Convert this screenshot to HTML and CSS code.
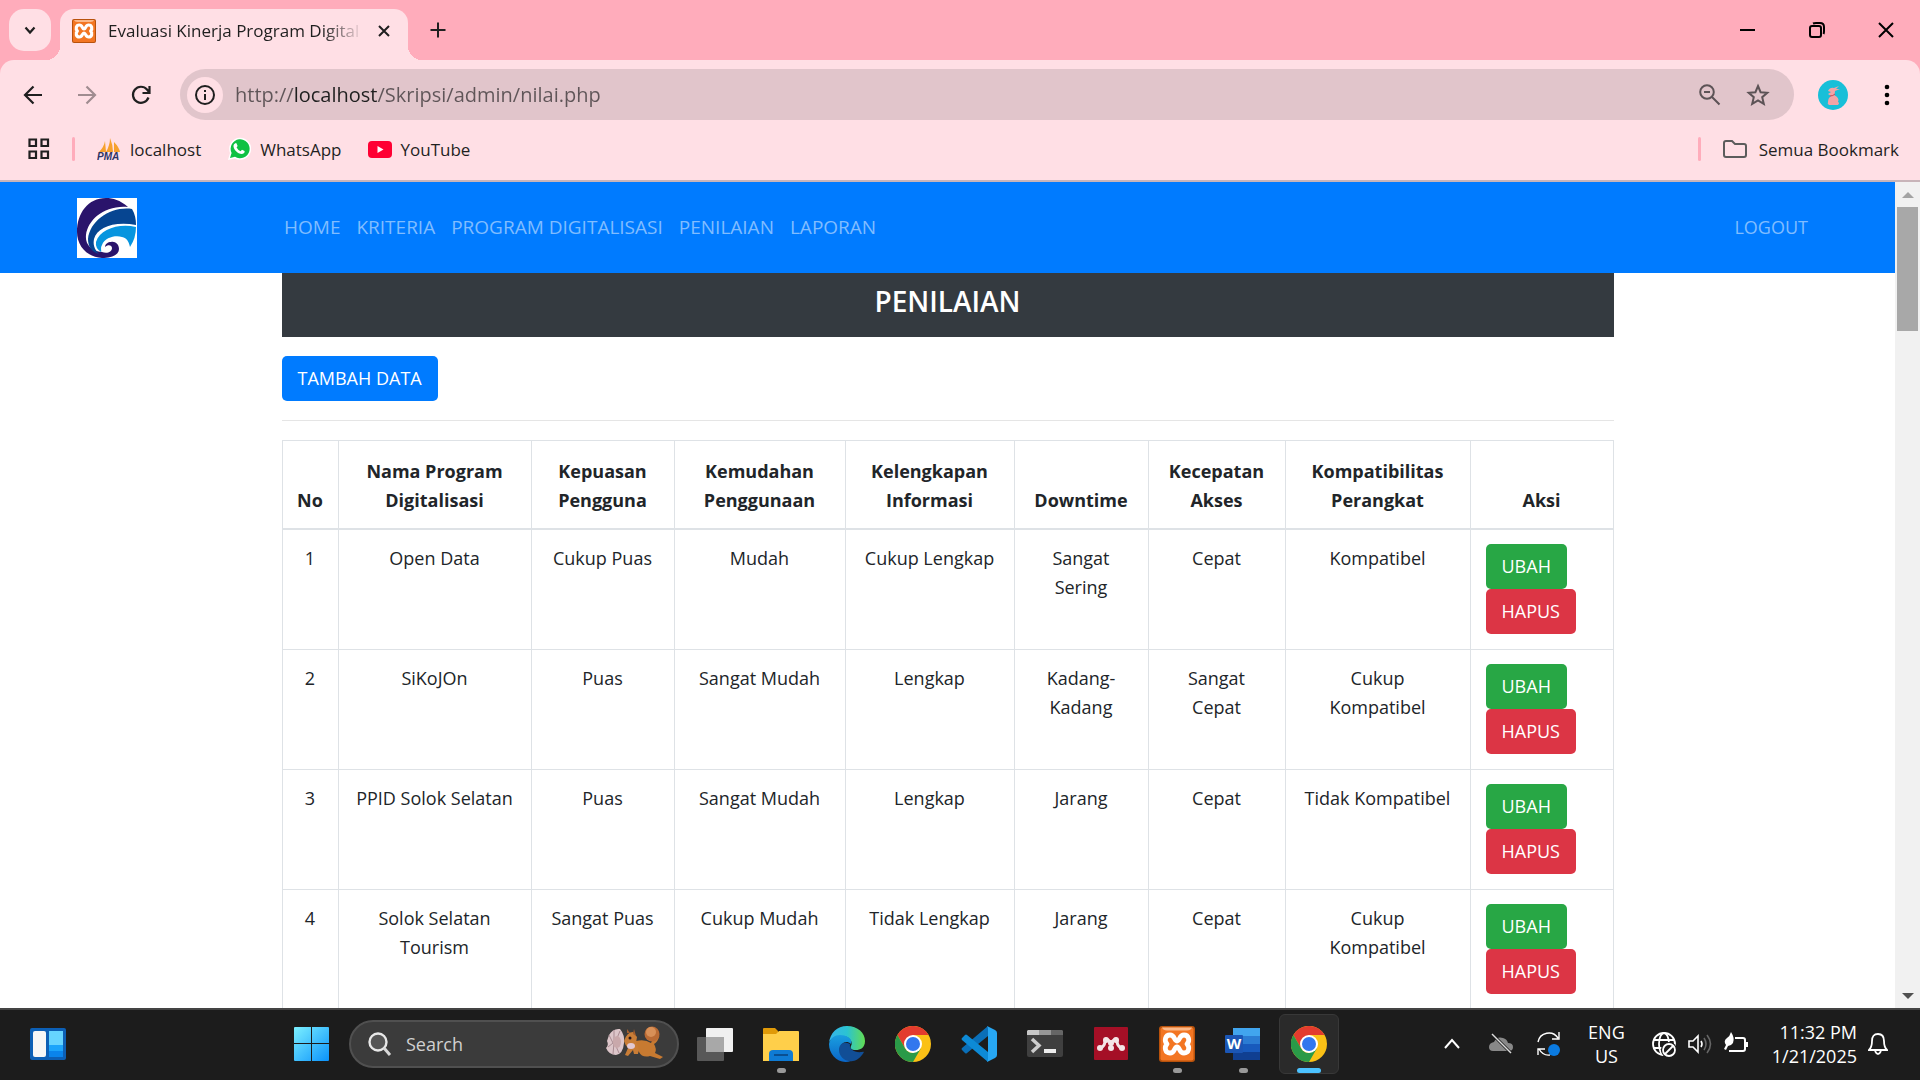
FILE: index.html
```html
<!DOCTYPE html>
<html lang="id">
<head>
<meta charset="utf-8">
<meta name="viewport" content="width=device-width, initial-scale=1">
<title>Evaluasi Kinerja Program Digitalisasi</title>
<link rel="stylesheet" href="styles.css">
</head>
<body>
<header class="browser">
  <div class="tabstrip">
    <button class="tab-search" aria-label="Telusuri tab"><svg width="18" height="18" viewBox="0 0 18 18"><path d="M4.500 6.500L9 11.500l4.500-5" fill="none" stroke="#1f1f1f" stroke-width="2.200"/></svg></button>
    <div class="tab">
      <svg width="24" height="24" viewBox="0 0 36 36">
        <g id="xampp">
          <rect width="36" height="36" rx="3" fill="#b8520c"/>
          <rect x="1.500" y="1.500" width="33" height="33" rx="2" fill="#f37623"/>
          <path d="M3 1.500h30q-1 3-5 3H8q-4 0-5-3z" fill="#fbb98a"/>
          <path d="M18 15c-3 0-2-6-7-6s-6 6-3 9c-3 3-2 9 3 9s4-6 7-6 2 6 7 6 6-6 3-9c3-3 2-9-3-9s-4 6-7 6z" fill="none" stroke="#fff" stroke-width="4.800" stroke-linejoin="round"/>
        </g>
      </svg>
      <span class="tab-title">Evaluasi Kinerja Program Digital</span>
      <button class="plain" aria-label="Tutup tab"><svg width="18" height="18" viewBox="0 0 18 18"><path d="M4 4l10 10M14 4L4 14" stroke="#1f1f1f" stroke-width="2"/></svg></button>
    </div>
    <button class="plain new-tab" aria-label="Tab baru"><svg width="18" height="18" viewBox="0 0 18 18"><path d="M9 1.500v15M1.500 9h15" stroke="#1f1f1f" stroke-width="2"/></svg></button>
    <div class="window-buttons">
      <button class="plain" aria-label="Minimalkan"><svg width="16" height="16" viewBox="0 0 16 16"><path d="M0 8h15" stroke="#000" stroke-width="2"/></svg></button>
      <button class="plain" aria-label="Pulihkan"><svg width="16" height="16" viewBox="0 0 16 16"><g fill="none" stroke="#000" stroke-width="2"><rect x="1" y="4" width="11" height="11" rx="2"/><path d="M4 1.500Q5 1 7 1h4q4 0 4 4v4q0 2-.5 3"/></g></svg></button>
      <button class="plain" aria-label="Tutup"><svg width="16" height="16" viewBox="0 0 16 16"><path d="M1 1l14 14M15 1L1 15" stroke="#000" stroke-width="2"/></svg></button>
    </div>
  </div>

  <div class="toolbar">
    <div class="nav-buttons">
      <button class="plain" aria-label="Kembali"><svg width="20" height="22" viewBox="0 0 20 22"><path d="M19 11H2.500M10.500 2.500L2 11l8.500 8.500" fill="none" stroke="#1f1f1f" stroke-width="2.200"/></svg></button>
      <button class="plain" aria-label="Maju"><svg width="20" height="22" viewBox="0 0 20 22"><path d="M1 11h16.500M9.500 2.500L18 11l-8.500 8.500" fill="none" stroke="#a08c90" stroke-width="2.200"/></svg></button>
      <button class="plain" aria-label="Muat ulang"><svg width="20" height="22" viewBox="0 0 20 22"><path d="M17.500 13.500A8 8 0 1 1 16 5.500L18 8M18.500 2v7h-7" fill="none" stroke="#1f1f1f" stroke-width="2.200"/></svg></button>
    </div>
    <div class="omnibox">
      <button class="site-info" aria-label="Informasi situs"><svg width="22" height="22" viewBox="0 0 22 22"><circle cx="11" cy="11" r="9" fill="none" stroke="#1f1f1f" stroke-width="2"/><path d="M11 10v6M11 6v2" stroke="#1f1f1f" stroke-width="2"/></svg></button>
      <input class="url" type="text" aria-label="Alamat" value="http://localhost/Skripsi/admin/nilai.php">
      <button class="plain" aria-label="Zoom"><svg width="24" height="24" viewBox="0 0 24 24"><g fill="none" stroke="#5c5356" stroke-width="2"><circle cx="9" cy="9" r="6.800"/><path d="M14 14l7.500 7.500M6 9h6"/></g></svg></button>
      <button class="plain" aria-label="Bookmark"><svg width="24" height="24" viewBox="0 0 24 24"><path d="M12 3l2.600 6.200 6.700.6-5.100 4.400 1.600 6.600L12 17.300l-5.800 3.500 1.600-6.600-5.100-4.400 6.700-.6z" fill="none" stroke="#5c5356" stroke-width="2"/></svg></button>
    </div>
    <button class="plain profile" aria-label="Profil"><svg width="30" height="30" viewBox="0 0 30 30"><circle cx="15" cy="15" r="15" fill="#18bfd8"/><path d="M10 11q2-4 6-3l5-2-3 3 4 0-5 2q0 3-1 4 6 3 4 7 2 1 0 3H11q-2-1-1-3 0-4 3-6l-3-2 3-2z" fill="#f3a3a6"/><path d="M12 16q3 0 5-2" fill="none" stroke="#c94654"/></svg></button>
    <button class="plain" aria-label="Menu"><svg width="8" height="24" viewBox="0 0 8 24"><circle cx="4" cy="4" r="2.300"/><circle cx="4" cy="12" r="2.300"/><circle cx="4" cy="20" r="2.300"/></svg></button>
  </div>

  <nav class="bookmarks" aria-label="Bookmark">
    <button class="plain" aria-label="Aplikasi"><svg width="22" height="22" viewBox="0 0 22 22"><path d="M1.500 1.500h6.500v6.500H1.500zM13.500 1.500h6.500v6.500h-6.500zM1.500 13.500h6.500v6.500H1.500zM13.500 13.500h6.500v6.500h-6.500z" fill="none" stroke="#1f1f1f" stroke-width="2.200"/></svg></button>
    <span class="divider"></span>
    <a href="#"><svg width="24" height="24" viewBox="0 0 24 24"><path d="M2 15Q7 10 8 4l1 11zM9 15q4-7 4-14 3 7 3 14zM17 15V5q5 5 6 10z" fill="#f6a12d"/><text class="pma" x="0" y="23">PMA</text></svg>localhost</a>
    <a href="#"><svg width="24" height="24" viewBox="0 0 24 24"><path d="M1 23l2-7A11 11 0 1 1 8 21.500z" fill="#fff"/><path d="M3 21l1.600-5A9.500 9.500 0 1 1 8 19.800z" fill="#0fc143"/><path d="M8 6.500q1-1 1.600 0l1 2.500-1 1.400q1.400 2.700 4 3.800l1.400-1.400 2.600 1.300q.4 2.500-2.600 2.900c-4.500 0-9-5-8.500-8.500q.3-1.300 1.500-2z" fill="#fff"/></svg>WhatsApp</a>
    <a href="#"><svg width="24" height="24" viewBox="0 0 24 24"><rect y="4" width="24" height="17" rx="4" fill="#f03"/><path d="M9.500 9v7l6-3.500z" fill="#fff"/></svg>YouTube</a>
    <span class="divider push"></span>
    <a class="all" href="#"><svg width="24" height="20" viewBox="0 0 24 20"><path d="M3 2h6l3 3h9q2 0 2 2v9q0 2-2 2H3q-2 0-2-2V4q0-2 2-2z" fill="none" stroke="#5c5c5c" stroke-width="2"/></svg>Semua Bookmark</a>
  </nav>
</header>

<div class="viewport">
  <div class="page">
    <nav class="navbar">
      <a class="brand" href="#" aria-label="Beranda"><svg width="60" height="60" viewBox="0 0 60 60">
        <rect width="60" height="60" fill="#fff"/>
        <path d="M51 9C43 2 36 0 29 0 11 0 0 15 0 34c0 14 10 25 25 26 9 0 17-3 17-9 0-5-4-8-8-7-3 0-6 2-6 5 3-3 7-2 7 1 0 4-5 6-10 4C14 53 8 46 9 37 11 22 27 7 51 9z" fill="#2a146b"/>
        <path d="M55 11C35 8 13 22 11 41c0 8 4 13 11 15C17 51 16 46 17 41 20 30 36 23 59 27c0-6-1-11-4-16z" fill="#064591"/>
        <path d="M59 29C42 25 23 31 19 44q-1 6 5 10c1 0-1-4 1-7 3-8 14-10 20-8 5 1 7 5 8 10q6-9 6-20z" fill="#0795df"/>
      </svg></a>
      <div class="menu">
        <a href="#">HOME</a>
        <a href="#">KRITERIA</a>
        <a href="#">PROGRAM DIGITALISASI</a>
        <a href="#">PENILAIAN</a>
        <a href="#">LAPORAN</a>
      </div>
      <a class="logout" href="#">LOGOUT</a>
    </nav>
    <main class="container">
      <h1 class="title">PENILAIAN</h1>
      <a class="btn primary" href="#">TAMBAH DATA</a>
      <hr>
      <table>
        <colgroup><col class="c-no"><col class="c-name"><col class="c-kp"><col class="c-km"><col class="c-kl"><col class="c-dt"><col class="c-ka"><col class="c-kt"><col class="c-ak"></colgroup>
        <thead>
          <tr><th>No</th><th>Nama Program Digitalisasi</th><th>Kepuasan Pengguna</th><th>Kemudahan Penggunaan</th><th>Kelengkapan Informasi</th><th>Downtime</th><th>Kecepatan Akses</th><th>Kompatibilitas Perangkat</th><th>Aksi</th></tr>
        </thead>
        <tbody>
          <tr><td>1</td><td>Open Data</td><td>Cukup Puas</td><td>Mudah</td><td>Cukup Lengkap</td><td>Sangat Sering</td><td>Cepat</td><td>Kompatibel</td><td><div class="actions"><a class="btn success" href="#">UBAH</a><a class="btn danger" href="#">HAPUS</a></div></td></tr>
          <tr><td>2</td><td>SiKoJOn</td><td>Puas</td><td>Sangat Mudah</td><td>Lengkap</td><td>Kadang-Kadang</td><td>Sangat Cepat</td><td>Cukup Kompatibel</td><td><div class="actions"><a class="btn success" href="#">UBAH</a><a class="btn danger" href="#">HAPUS</a></div></td></tr>
          <tr><td>3</td><td>PPID Solok Selatan</td><td>Puas</td><td>Sangat Mudah</td><td>Lengkap</td><td>Jarang</td><td>Cepat</td><td>Tidak Kompatibel</td><td><div class="actions"><a class="btn success" href="#">UBAH</a><a class="btn danger" href="#">HAPUS</a></div></td></tr>
          <tr><td>4</td><td>Solok Selatan Tourism</td><td>Sangat Puas</td><td>Cukup Mudah</td><td>Tidak Lengkap</td><td>Jarang</td><td>Cepat</td><td>Cukup Kompatibel</td><td><div class="actions"><a class="btn success" href="#">UBAH</a><a class="btn danger" href="#">HAPUS</a></div></td></tr>
        </tbody>
      </table>
    </main>
  </div>
  <div class="scrollbar">
    <svg width="12" height="6" viewBox="0 0 12 6"><path d="M0 6l6-6 6 6z" fill="#a3a3a3"/></svg>
    <span class="thumb"></span>
    <svg width="12" height="6" viewBox="0 0 12 6"><path d="M0 0l6 6 6-6z" fill="#505050"/></svg>
  </div>
</div>

<footer class="taskbar">
  <div class="side">
    <button class="plain" aria-label="Widget"><svg width="36" height="32" viewBox="0 0 36 32"><rect width="36" height="32" rx="2" fill="#0c5fb5"/><rect x="3" y="3" width="13" height="26" rx="2" fill="#f6f6f6"/><path d="M19 3h14v14H19z" fill="#66d4ff"/><path d="M19 17h14v6H19z" fill="#1ba4fb"/><path d="M19 23h14v6H19z" fill="#0a84ec"/></svg></button>
  </div>
  <div class="apps">
    <button class="plain start" aria-label="Mulai"><svg width="36" height="36" viewBox="0 0 36 36"><defs><linearGradient id="win" x2="1" y2="1"><stop offset="0" stop-color="#7cf0ff"/><stop offset="1" stop-color="#0a92fb"/></linearGradient></defs><path d="M1 1h16v16H0V2q0-1 1-1zM18 1h16q1 0 1 1v15H18zM0 18h17v17H1q-1 0-1-1zM18 18h17v16q0 1-1 1H18z" fill="url(#win)"/></svg></button>
    <label class="search">
      <svg width="24" height="30" viewBox="0 0 24 30"><circle cx="10" cy="13" r="8.500" fill="#555" stroke="#e8e8e8" stroke-width="2.400"/><path d="M16 19l6 7" stroke="#d8d8d8" stroke-width="3"/></svg>
      <input type="text" placeholder="Search" aria-label="Search">
      <svg width="60" height="42" viewBox="0 0 60 42">
        <path d="M4 12Q8 5 15 6q5 6 4 14-1 11-8 12-7 0-10-7 3-3 1-7z" fill="#dcc5c9"/>
        <path d="M8 20L4 12M8 20L3 24M9 20L9 7M9 20L8 31M10 20l5-12M10 21l4 9" stroke="#a98b92" fill="none"/><ellipse cx="12" cy="19" rx="4" ry="6" fill="#c9a8ab"/>
        <path d="M31 18q9-2 15 2l2-4q6 0 7-5-2 8-6 10 3 5 1 9l8 4-3 2-10-3q-8 2-11-4l-3-4z" fill="#c77a31"/>
        <circle cx="47" cy="11" r="7.500" fill="#ba6b35"/><circle cx="46" cy="9" r="5" fill="#d89058"/>
        <path d="M19 18q3-9 9-9l4 5-1 6q4 4 2 11h-4l-1-4-5 6-3-1 3-7q-3-3-4-7z" fill="#c97d36"/>
        <path d="M22 10V6l3 4M28 11l1-5 2 7" fill="#a65f2d"/><circle cx="25" cy="15" r="1.500" fill="#26161b"/><ellipse cx="26" cy="23" rx="4" ry="3" fill="#e2c9d3"/>
      </svg>
    </label>
    <button class="plain task" aria-label="Tampilan tugas"><svg width="36" height="36" viewBox="0 0 36 36"><rect x="0" y="11" width="27" height="24" rx="1" fill="#585858"/><rect x="9" y="2" width="27" height="24" rx="1" fill="#f0f0f0"/><path d="M9 11h18v15H9z" fill="#a8a8a8"/></svg></button>
    <button class="plain task open" aria-label="File Explorer"><svg width="36" height="36" viewBox="0 0 36 36"><path d="M0 3q0-1 1-1h11l3 3v4H0z" fill="#e09a08"/><path d="M0 8h13l3-3h19q1 0 1 1v29H0z" fill="#ffcf4a"/><path d="M6 35V28q0-4 4-4h16q4 0 4 4v7z" fill="#0f7bd4"/><path d="M11 29h14" stroke="#0a4f91" stroke-width="2"/></svg></button>
    <button class="plain task" aria-label="Edge"><svg width="36" height="36" viewBox="0 0 36 36"><defs><linearGradient id="edge-top"><stop offset="0" stop-color="#36b4ec"/><stop offset=".5" stop-color="#2bc3d2"/><stop offset="1" stop-color="#62dc52"/></linearGradient><linearGradient id="edge-low" x2="0" y2="1"><stop offset="0" stop-color="#1a9fe0"/><stop offset="1" stop-color="#0a66c8"/></linearGradient></defs><path d="M0 17C1 7 8 0 18 0c11 0 18 7 18 15 0 7-5 9-9 9-5 0-6-2-5-4 3-5-3-10-9-10C6 10 1 13 0 17z" fill="url(#edge-top)"/><path d="M0 18C1 12 6 9 11 9c7 0 13 4 11 9-5-5-12 0-11 7 1 6 6 9 11 10-12 4-22-6-22-17z" fill="url(#edge-low)"/><path d="M10 24c0-6 5-9 11-6-1 5 4 9 12 8 3-1 2 0 0 3-3 4-8 7-12 6-6 0-11-5-11-11z" fill="#114e96"/></svg></button>
    <button class="plain task" aria-label="Chrome"><svg width="36" height="36" viewBox="0 0 36 36"><g id="chrome"><circle cx="18" cy="18" r="18" fill="#fbc116"/><path d="M18 9h15.600A18 18 0 0 0 2.400 9l7.800 13.500z" fill="#e33b2e"/><path d="M2.400 9A18 18 0 0 0 18 36l7.800-13.500-7.800 4.500q-5 0-7.800-4.500z" fill="#2a9a48"/><circle cx="18" cy="18" r="9" fill="#fff"/><circle cx="18" cy="18" r="7" fill="#3277ee"/></g></svg></button>
    <button class="plain task" aria-label="Visual Studio Code"><svg width="36" height="36" viewBox="0 0 36 36"><path d="M1 24l3 3q1 1 2 0L27 10V0L1 22q-1 1 0 2z" fill="#0a6fb8"/><path d="M1 12l3-3q1-1 2 0l21 17v10L1 14q-1-1 0-2z" fill="#0d8ad6"/><path d="M26 0l8 4q2 1 2 3v22q0 2-2 3l-8 4q1-1 1-3V3q0-2-1-3z" fill="#27a7f3"/></svg></button>
    <button class="plain task" aria-label="Terminal"><svg width="36" height="36" viewBox="0 0 36 36"><rect y="4" width="36" height="27" rx="2" fill="#3f3f3f"/><path d="M1 4h11v5H0V5z" fill="#c6c6c6"/><path d="M12 4h12v5H12z" fill="#979797"/><path d="M24 4h11l1 1v4H24z" fill="#666"/><path d="M5 13l7 6.500L5 26" fill="none" stroke="#ccc" stroke-width="3.500"/><path d="M17 23h12v4H17z" fill="#eee"/></svg></button>
    <button class="plain task" aria-label="Mendeley"><svg width="36" height="36" viewBox="0 0 36 36"><rect x="1" y="1" width="34" height="33" rx="1" fill="#a50f26"/><path d="M7 22q5-1 5-8M29 22q-5-1-5-8M12 13q4 0 6 5 2-5 6-5" fill="none" stroke="#f4e4e6" stroke-width="3"/><g fill="#f4e4e6"><circle cx="13" cy="14" r="3"/><circle cx="23" cy="14" r="3"/><circle cx="7" cy="22" r="3"/><circle cx="29" cy="22" r="3"/><circle cx="18" cy="22" r="3"/><circle cx="18" cy="17" r="3"/></g></svg></button>
    <button class="plain task open" aria-label="XAMPP"><svg width="36" height="36" viewBox="0 0 36 36"><use href="#xampp"/></svg></button>
    <button class="plain task open" aria-label="Word"><svg width="36" height="36" viewBox="0 0 36 36"><path d="M8 2h27v8H8z" fill="#41a5ee"/><path d="M8 10h27v8H8z" fill="#2b7cd3"/><path d="M8 18h27v8H8z" fill="#185abd"/><path d="M8 26h27v8H8z" fill="#103f91"/><rect y="9" width="18" height="18" rx="1" fill="#1b56b5"/><text class="word" x="9" y="23">W</text></svg></button>
    <button class="plain task open active" aria-label="Chrome aktif"><svg width="36" height="36" viewBox="0 0 36 36"><use href="#chrome"/></svg></button>
  </div>
  <div class="tray">
    <svg class="chevron" width="16" height="16" viewBox="0 0 16 16"><path d="M1 12l7-8 7 8" fill="none" stroke="#fff" stroke-width="2"/></svg>
    <svg class="cloud" width="26" height="24" viewBox="0 0 26 24"><path d="M5 19q-4 0-4-4t5-5q3-6 9-4 4 1 5 5 5 0 5 4t-4 4z" fill="#888"/><path d="M5 3l17 17" stroke="#1c1c1c" stroke-width="3"/><path d="M4 2l19 19" stroke="#ddd" stroke-width="1.500"/></svg>
    <svg width="26" height="26" viewBox="0 0 26 26"><path d="M2 11A11 11 0 0 1 22 7M23 1v7h-7M2 24v-6h7M3 18q4 7 11 6" fill="none" stroke="#fff" stroke-width="1.400"/><circle cx="18" cy="19" r="6" fill="#0a7ae0"/></svg>
    <div class="lang">ENG<br>US</div>
    <svg width="26" height="26" viewBox="0 0 26 26"><g fill="none" stroke="#fff" stroke-width="1.800"><circle cx="13" cy="13" r="11"/><ellipse cx="13" cy="13" rx="5" ry="11"/><path d="M3 9h20M3 17h12"/></g><circle cx="18" cy="19" r="8" fill="#1c1c1c"/><g fill="none" stroke="#fff" stroke-width="1.800"><circle cx="18" cy="19" r="6"/><path d="M14 23l8-8"/></g></svg>
    <svg width="24" height="24" viewBox="0 0 24 24"><path d="M1 9h4l5-5v16l-5-5H1z" fill="none" stroke="#fff" stroke-width="1.600"/><path d="M13 9q2 3 0 6" fill="none" stroke="#fff" stroke-width="1.600"/><path d="M16 6q4 6 0 12M19 3q7 9 0 18" fill="none" stroke="#666" stroke-width="1.600"/></svg>
    <svg width="26" height="24" viewBox="0 0 26 24"><path d="M12 6h8q2 0 2 2v9q0 2-2 2H6" fill="none" stroke="#fff" stroke-width="2"/><path d="M23 10h2v5h-2z" fill="#fff"/><path d="M8 0q4 6 2 11-2 3-5 3l-2 4-2-1 2-4q-3-4 1-7 3-2 4-6z" fill="#fff"/></svg>
    <div class="clock">11:32 PM<br>1/21/2025</div>
    <svg width="20" height="24" viewBox="0 0 20 24"><path d="M1 18q3-3 3-9 0-7 6-7t6 7q0 6 3 9zM7 19q3 6 6 0" fill="none" stroke="#fff" stroke-width="1.800"/></svg>
  </div>
</footer>
</body>
</html>
```
FILE: styles.css
```css
* { box-sizing: border-box; }

body {
  margin: 0;
  height: 100vh;
  display: flex;
  flex-direction: column;
  overflow: hidden;
  font: 18px/29px "Open Sans", "Noto Sans", sans-serif;
  color: #212529;
  background: #fff;
}

svg { display: block; flex: none; }
a { color: inherit; text-decoration: none; }
input { font: inherit; color: inherit; border: 0; padding: 0; background: none; min-width: 0; outline: 0; }
.plain { display: flex; align-items: center; justify-content: center; border: 0; padding: 0; background: none; }

/* Browser chrome */
.browser { flex: none; background: #ffacbb; border-bottom: 2px solid #c8b4b9; }
.tabstrip { display: flex; align-items: center; height: 60px; padding-left: 9px; }
.tab-search { display: flex; align-items: center; justify-content: center; width: 42px; height: 42px; border: 0; border-radius: 15px; padding: 0; background: #ffdfe5; }
.tab { position: relative; align-self: flex-end; display: flex; align-items: center; gap: 12px; width: 348px; height: 51px; margin-left: 9px; padding: 0 15px 8px 12px; border-radius: 14px 14px 0 0; background: #ffdfe5; font-size: 17px; }
.tab::before, .tab::after { content: ""; position: absolute; bottom: 0; width: 14px; height: 14px; }
.tab::before { right: 100%; background: radial-gradient(circle at 0 0, transparent 14px, #ffdfe5 14px); }
.tab::after { left: 100%; background: radial-gradient(circle at 100% 0, transparent 14px, #ffdfe5 14px); }
.tab-title { flex: 1; overflow: hidden; white-space: nowrap; color: #1f1f1f; mask-image: linear-gradient(to left, transparent, #000 40px); }
.new-tab { margin-left: 21px; }
.window-buttons { display: flex; margin-left: auto; }
.window-buttons .plain { width: 69px; height: 60px; }

.toolbar { display: flex; align-items: center; gap: 24px; height: 70px; padding: 0 29px 1px 23px; border-radius: 14px 14px 0 0; background: #ffdfe5; }
.nav-buttons { display: flex; gap: 34px; margin-right: 5px; }
.omnibox { flex: 1; display: flex; align-items: center; gap: 24px; height: 51px; padding: 0 24px 0 7px; border-radius: 26px; background: #e1c5cb; }
.site-info { display: flex; align-items: center; justify-content: center; width: 36px; height: 36px; border: 0; border-radius: 50%; padding: 0; background: #ffdfe5; }
.url { flex: 1; height: 30px; margin-left: -12px; font-size: 20px; color: transparent; background: linear-gradient(to right, #5f5558 58px, #1f1f1f 58px, #1f1f1f 142px, #5f5558 142px); background-clip: text; }
.profile { margin-right: 11px; }

.bookmarks { display: flex; align-items: center; gap: 22px; height: 50px; padding: 0 21px 12px 28px; background: #ffdfe5; font-size: 17px; color: #1f1f1f; }
.bookmarks a { display: flex; align-items: center; gap: 9px; margin-right: 4px; }
.bookmarks .all { gap: 12px; margin-right: 0; }
.divider { width: 3px; height: 24px; border-radius: 2px; background: #ffacbb; }
.push { margin-left: auto; }
.pma { font: italic bold 10px "Liberation Sans", sans-serif; fill: #2d3465; }

/* Web page */
.viewport { flex: 1; display: flex; min-height: 0; }
.page { flex: 1; min-width: 0; overflow: hidden; }
.navbar { display: flex; align-items: center; height: 91px; padding: 0 77px; background: #007bff; color: #80bdff; }
.brand { margin-right: 139px; }
.menu { display: flex; flex: 1; font-size: 19px; }
.menu a { padding: 0 8px; }
.logout { padding: 0 10px; }
.container { max-width: 1332px; margin: 0 auto; }
.title { margin: 0 0 19px; height: 64px; padding-top: 10px; background: #343a40; color: #fff; font-size: 28px; line-height: 36px; font-weight: 600; text-align: center; }
.btn { display: inline-block; padding: 8px 16px; border-radius: 5px; line-height: 29px; color: #fff; vertical-align: top; }
.primary { background: #007bff; }
.success { background: #28a745; }
.danger { background: #dc3545; }
hr { margin: 19px 0; border: 0; border-top: 1px solid #e5e5e5; }

table { width: 100%; table-layout: fixed; border-collapse: collapse; text-align: center; }
th, td { border: 1px solid #dee2e6; padding: 14px 15px; vertical-align: top; }
th { padding: 16px 10px 13px; vertical-align: bottom; border-bottom-width: 2px; font-weight: 700; }
td { padding-bottom: 15px; }
.c-no { width: 56px; }
.c-name { width: 193px; }
.c-kp { width: 143px; }
.c-km { width: 171px; }
.c-kl { width: 169px; }
.c-dt { width: 134px; }
.c-ka { width: 137px; }
.c-kt { width: 185px; }
.c-ak { width: 143px; }
.actions { display: flex; flex-direction: column; align-items: flex-start; }

.scrollbar { display: flex; flex-direction: column; align-items: center; width: 25px; padding: 10px 0 9px; background: #f1f1f1; }
.thumb { width: 21px; height: 124px; margin: 9px 0 auto; background: #a8a8a8; }

/* Windows taskbar */
.taskbar { flex: none; display: flex; align-items: center; height: 72px; padding: 0 32px 2px 30px; border-top: 2px solid #444; background: #1c1c1c; color: #fff; }
.side { width: 264px; }
.apps { display: flex; align-items: center; height: 100%; }
.start { margin-right: 19px; }
.search { display: flex; align-items: center; gap: 14px; width: 330px; height: 48px; margin-right: 3px; padding: 0 12px 0 17px; border: 2px solid #505050; border-radius: 24px; background: #3b3b3b; }
.search input { flex: 1; width: 100px; }
.search input::placeholder { color: #d0d0d0; opacity: 1; }
.task { position: relative; width: 66px; height: 60px; }
.open::after { content: ""; position: absolute; bottom: 1px; width: 9px; height: 5px; border-radius: 3px; background: #999; }
.active { width: 60px; margin-left: 3px; border: 1px solid #383838; border-radius: 6px; background: #2a2a2a; }
.active::after { bottom: 0; width: 24px; background: #4cc2ff; }
.word { font: bold 15px "Open Sans", sans-serif; fill: #fff; text-anchor: middle; }
.tray { flex: 1; display: flex; align-items: center; justify-content: flex-end; gap: 11px; line-height: 24px; }
.chevron { margin-right: 17px; }
.cloud { margin-right: 11px; }
.lang { margin: 0 15px; text-align: center; }
.clock { margin-left: 12px; text-align: right; }
```
